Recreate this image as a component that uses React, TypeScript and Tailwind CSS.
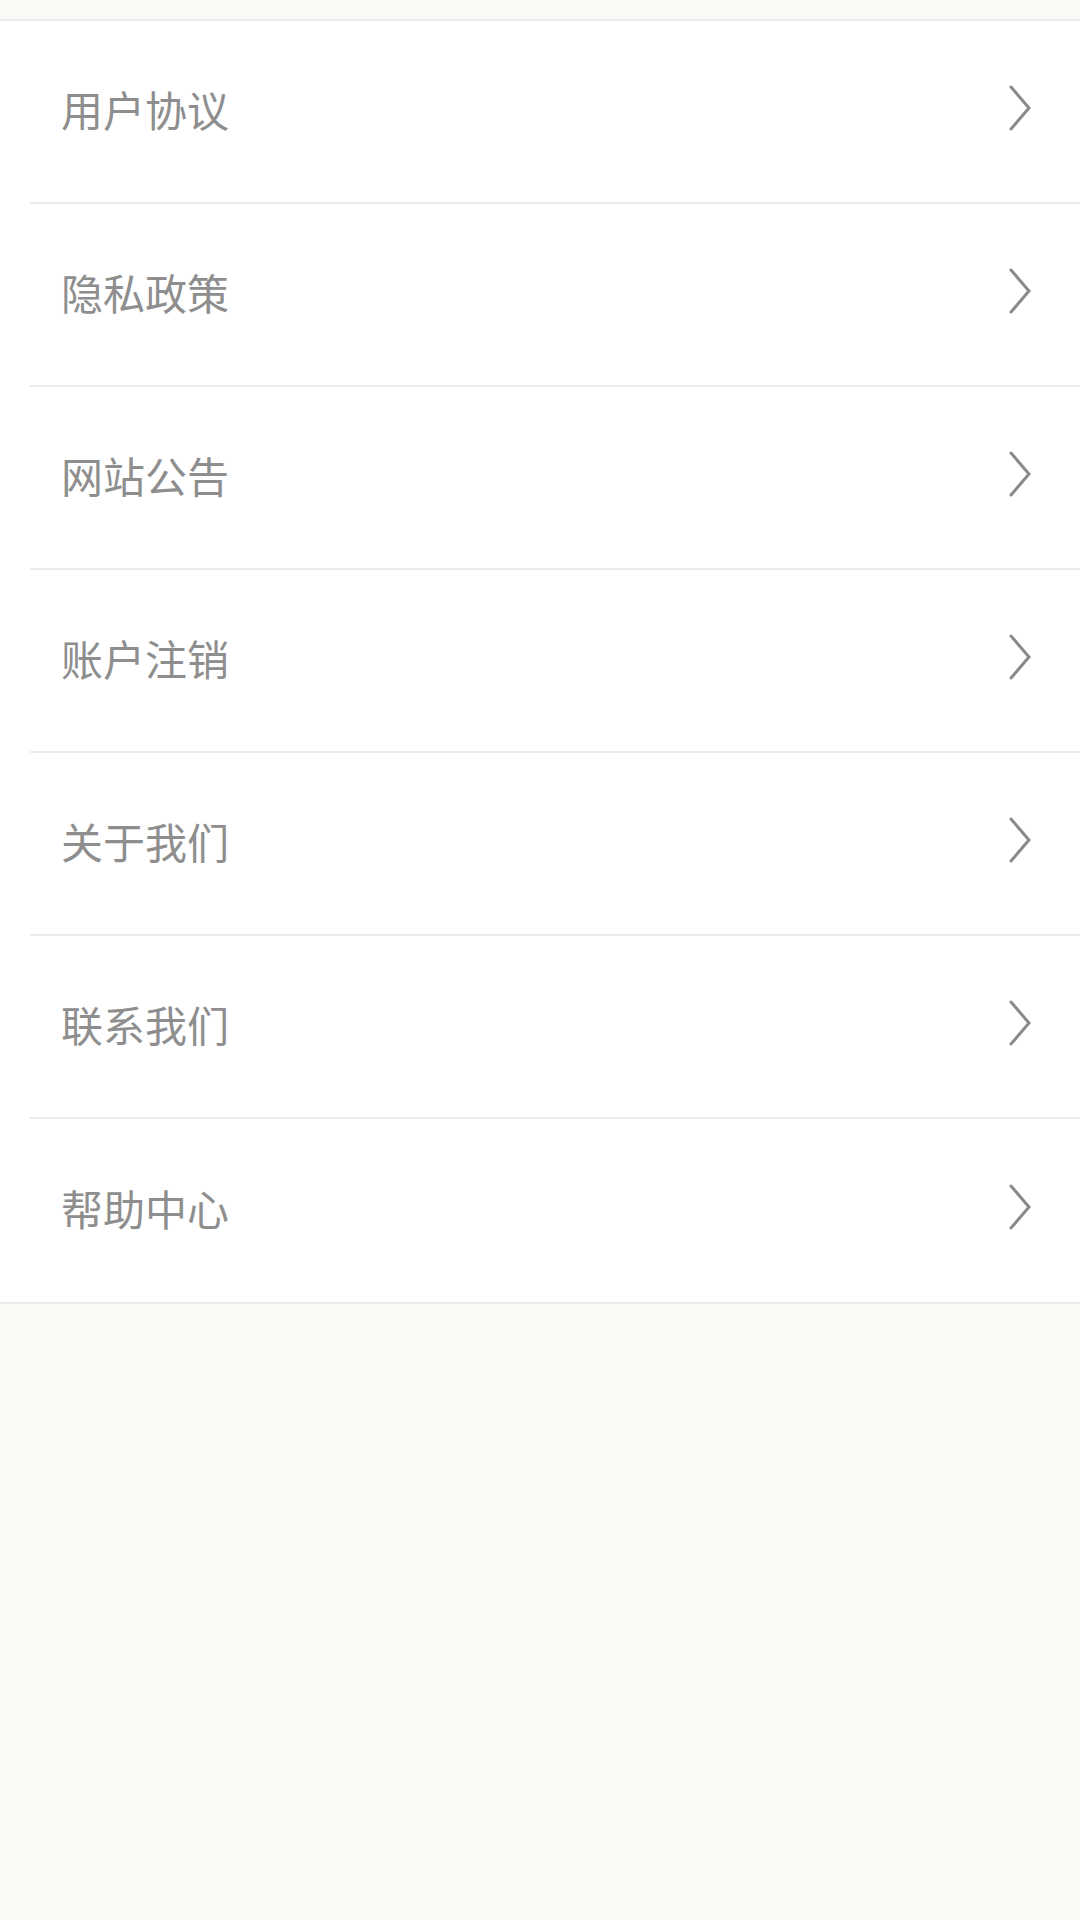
const items = ["用户协议", "隐私政策", "网站公告", "账户注销", "关于我们", "联系我们", "帮助中心"];

function Chevron() {
  return (
    <svg width="22" height="46" viewBox="0 0 22 46" fill="none" className="-mt-[8px]">
      <path d="M2 2 L20 23 L2 44" stroke="#8a8a8a" strokeWidth="3" strokeLinecap="round" strokeLinejoin="miter" />
    </svg>
  );
}

export default function App() {
  return (
    <div
      className="min-h-[1920px] w-[1080px] bg-[#faf9f6]"
      style={{ fontFamily: '"Noto Sans CJK SC", "Noto Sans", sans-serif' }}
    >
      <div className="h-[19px]" />
      <div className="bg-white border-t-2 border-b-2 border-[#ebebeb]">
        <div className="ml-[30px]">
          {items.map((label, i) => (
            <div
              key={label}
              className={
                i < items.length - 1
                  ? "flex h-[183px] items-center justify-between border-b-2 border-[#ebebeb] pl-[31px] pr-[49px]"
                  : "flex h-[183px] items-center justify-between pl-[31px] pr-[49px]"
              }
            >
              <span className="mb-[6px] text-[42px] leading-none text-[#8e8e8e]">{label}</span>
              <Chevron />
            </div>
          ))}
        </div>
      </div>
    </div>
  );
}
